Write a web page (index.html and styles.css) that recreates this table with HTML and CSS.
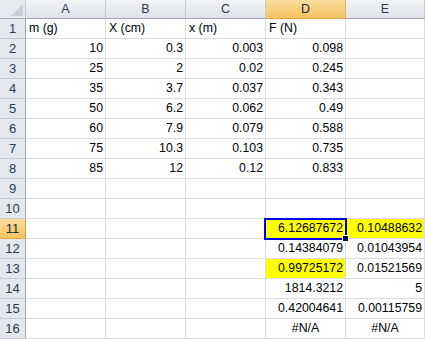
FILE: index.html
```html
<!DOCTYPE html>
<html lang="en">
<head>
    <meta charset="UTF-8">
    <title>Book1</title>
    <link rel="stylesheet" href="styles.css">
</head>
<body>
    <table class="sheet">
        <colgroup>
            <col class="col-head">
            <col class="col"><col class="col"><col class="col"><col class="col"><col class="col-last">
        </colgroup>
        <thead>
            <tr>
                <th class="corner">
                    <svg width="12" height="12" viewBox="0 0 12 12"><polygon points="12,0 12,12 0,12" fill="#c9ced4"/></svg>
                </th>
                <th>A</th>
                <th>B</th>
                <th>C</th>
                <th class="active">D</th>
                <th>E</th>
            </tr>
        </thead>
        <tbody>
            <tr><th>1</th><td>m (g)</td><td>X (cm)</td><td>x (m)</td><td>F (N)</td><td></td></tr>
            <tr><th>2</th><td class="num">10</td><td class="num">0.3</td><td class="num">0.003</td><td class="num">0.098</td><td></td></tr>
            <tr><th>3</th><td class="num">25</td><td class="num">2</td><td class="num">0.02</td><td class="num">0.245</td><td></td></tr>
            <tr><th>4</th><td class="num">35</td><td class="num">3.7</td><td class="num">0.037</td><td class="num">0.343</td><td></td></tr>
            <tr><th>5</th><td class="num">50</td><td class="num">6.2</td><td class="num">0.062</td><td class="num">0.49</td><td></td></tr>
            <tr><th>6</th><td class="num">60</td><td class="num">7.9</td><td class="num">0.079</td><td class="num">0.588</td><td></td></tr>
            <tr><th>7</th><td class="num">75</td><td class="num">10.3</td><td class="num">0.103</td><td class="num">0.735</td><td></td></tr>
            <tr><th>8</th><td class="num">85</td><td class="num">12</td><td class="num">0.12</td><td class="num">0.833</td><td></td></tr>
            <tr><th>9</th><td></td><td></td><td></td><td></td><td></td></tr>
            <tr><th>10</th><td></td><td></td><td></td><td></td><td></td></tr>
            <tr><th class="active">11</th><td></td><td></td><td></td><td class="num fill selected">6.12687672<span class="handle"></span></td><td class="num fill">0.10488632</td></tr>
            <tr><th>12</th><td></td><td></td><td></td><td class="num">0.14384079</td><td class="num">0.01043954</td></tr>
            <tr><th>13</th><td></td><td></td><td></td><td class="num fill">0.99725172</td><td class="num">0.01521569</td></tr>
            <tr><th>14</th><td></td><td></td><td></td><td class="num">1814.3212</td><td class="num">5</td></tr>
            <tr><th>15</th><td></td><td></td><td></td><td class="num">0.42004641</td><td class="num">0.00115759</td></tr>
            <tr><th>16</th><td></td><td></td><td></td><td class="err">#N/A</td><td class="err">#N/A</td></tr>
        </tbody>
    </table>
</body>
</html>
```

FILE: styles.css
```css
body {
    margin: 0;
    background-color: white;
    font-family: 'Liberation Sans', Arial, sans-serif;
    font-size: 12.3px;
    overflow: hidden;
}

.sheet {
    border-collapse: separate;
    border-spacing: 0;
    table-layout: fixed;
    width: 425px;
}

.col-head {
    width: 26px;
}

.col {
    width: 80px;
}

.col-last {
    width: 79px;
}

th, td {
    box-sizing: border-box;
    padding: 0;
    white-space: nowrap;
    overflow: visible;
}

/* column letters */
thead th {
    height: 19px;
    font-weight: normal;
    font-size: 12.5px;
    color: #2a3b52;
    text-align: center;
    vertical-align: middle;
    background: linear-gradient(#f1f3f5, #dfe3e8);
    border-right: 1px solid #c3c9d0;
    border-bottom: 1px solid #9ea7b2;
    line-height: 17px;
}

thead th.corner {
    position: relative;
    background: #e6e9ed;
    border-right: 1px solid #c3c9d0;
}

.corner svg {
    position: absolute;
    right: 2px;
    bottom: 2px;
}

/* row numbers */
tbody th {
    height: 20px;
    font-weight: normal;
    font-size: 13px;
    color: #2a3b52;
    text-align: center;
    vertical-align: bottom;
    padding-bottom: 2px;
    background: #e4e8ec;
    border-right: 1px solid #9ea7b2;
    border-bottom: 1px solid #c3c9d0;
}

thead th.active, tbody th.active {
    background: linear-gradient(#f9dc9c, #f3c462);
    border-bottom-color: #f0a13e;
    color: #1f2a36;
}

thead th.active {
    border-right-color: #e9b15a;
}

tbody th.active {
    border-right-color: #e7a041;
}

td {
    height: 20px;
    color: #000;
    vertical-align: bottom;
    padding: 0 3px 3px 3px;
    border-right: 1px solid #dadcdd;
    border-bottom: 1px solid #dadcdd;
    line-height: 14px;
}

td.num {
    text-align: right;
    padding-right: 2px;
}

td.err {
    text-align: center;
}

td.fill {
    background-color: #ffff00;
}

td.selected {
    position: relative;
}

td.selected::before {
    content: "";
    position: absolute;
    left: -2px;
    top: -1px;
    right: -2px;
    bottom: -2px;
    border: 2px solid #0000f0;
}

.handle {
    position: absolute;
    right: -4px;
    bottom: -4px;
    width: 5px;
    height: 5px;
    background: #0a0a50;
    border: 1px solid white;
    z-index: 2;
}
```
